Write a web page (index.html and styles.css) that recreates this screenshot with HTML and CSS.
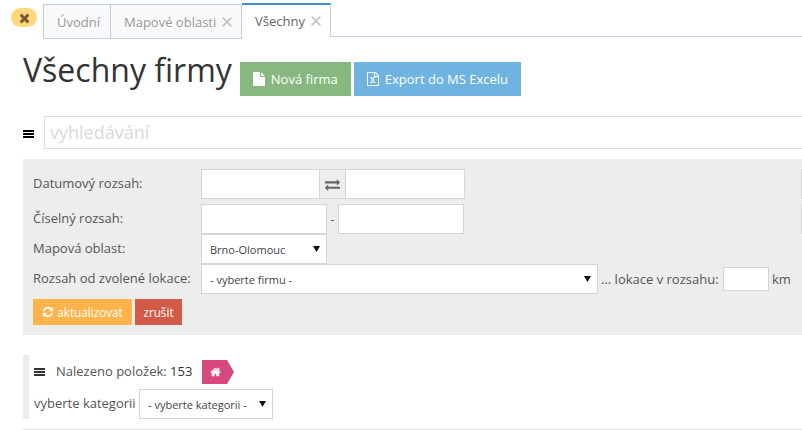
FILE: index.html
```html
<!DOCTYPE html>
<html lang="cs">
<head>
<meta charset="utf-8">
<title>Všechny firmy</title>
<link rel="stylesheet" href="styles.css">
</head>
<body>
<header class="tabbar">
  <button class="closeall" aria-label="Zavřít">
    <svg class="ic" width="11" height="14" viewBox="0 0 1408 1792"><path d="M1298 1322q0 40-28 68l-136 136q-28 28-68 28t-68-28l-294-294-294 294q-28 28-68 28t-68-28l-136-136q-28-28-28-68t28-68l294-294-294-294q-28-28-28-68t28-68l136-136q28-28 68-28t68 28l294 294 294-294q28-28 68-28t68 28l136 136q28 28 28 68t-28 68l-294 294 294 294q28 28 28 68z"/></svg>
  </button>
  <nav class="tabs">
    <span class="tab tab-home">Úvodní</span>
    <span class="tab tab-map">Mapové oblasti <svg class="tab-x" width="10" height="10" viewBox="0 0 10 10"><path d="M.7.7l8.600 8.600M9.300.7L.7 9.300"/></svg></span>
    <span class="tab tab-active">Všechny <svg class="tab-x" width="10" height="10" viewBox="0 0 10 10"><path d="M.7.7l8.600 8.600M9.300.7L.7 9.300"/></svg></span>
  </nav>
</header>

<main class="page">
  <div class="heading">
    <h1>Všechny firmy</h1>
    <a class="btn btn-green">
      <svg class="ic" width="12" height="14" viewBox="0 0 1536 1792"><path d="M1024 512v-472q22 14 36 28l408 408q14 14 28 36h-472zm-128 32q0 40 28 68t68 28h544v1056q0 40-28 68t-68 28h-1344q-40 0-68-28t-28-68v-1600q0-40 28-68t68-28h800v544z"/></svg>
      Nová firma</a>
    <a class="btn btn-blue">
      <svg class="ic" width="12" height="14" viewBox="0 0 1536 1792"><path d="M1468 380q28 28 48 76t20 88v1152q0 40-28 68t-68 28h-1344q-40 0-68-28t-28-68v-1600q0-40 28-68t68-28h896q40 0 88 20t76 48zm-444-244v376h376q-10-29-22-41l-313-313q-12-12-41-22zm384 1528v-1024h-416q-40 0-68-28t-28-68v-416h-768v1536h1280zm-1025-373v106h281v-106h-75l103-161q5-7 10-16.500t7.500-13.500 3.500-4h2q1 4 5 10 2 4 4.500 7.500t6 8 6.500 8.500l107 161h-76v106h291v-106h-68l-192-273 195-282h67v-107h-279v107h74l-103 159q-4 7-10 16.500t-9 13.500l-2 3h-2q-1-4-5-10-6-11-17-23l-102-159h76v-107h-290v107h68l189 272-194 283h-68z"/></svg>
      Export do MS Excelu</a>
  </div>

  <div class="search">
    <svg class="bars bars-black" width="11" height="8" viewBox="0 0 11 8"><path d="M0 0h11v2H0zM0 3h11v2H0zM0 6h11v2H0z"/></svg>
    <input class="search-input" type="text" placeholder="vyhledávání">
  </div>

  <section class="filter">
    <div class="filter-main">
      <div class="row row-date">
        <label class="lbl">Datumový rozsah:</label>
        <input class="inp inp-date" type="text">
        <span class="addon"><svg class="ic" width="15" height="15" viewBox="0 0 1792 1792"><path d="M1792 1184v192q0 13-9.500 22.500t-22.500 9.500h-1376v192q0 13-9.500 22.500t-22.500 9.500q-12 0-24-10l-319-320q-9-9-9-22 0-14 9-23l320-320q9-9 23-9 13 0 22.500 9.500t9.500 22.500v192h1376q13 0 22.500 9.500t9.500 22.500zm0-544q0 14-9 23l-320 320q-9 9-23 9-13 0-22.500-9.500t-9.500-22.500v-192h-1376q-13 0-22.500-9.500t-9.500-22.500v-192q0-13 9.500-22.500t22.500-9.500h1376v-192q0-14 9-23t23-9q12 0 24 10l319 319q9 9 9 23z"/></svg></span>
        <input class="inp inp-date2" type="text">
      </div>
      <div class="row row-num">
        <label class="lbl">Číselný rozsah:</label>
        <input class="inp inp-num" type="text">
        <span class="dash">-</span>
        <input class="inp inp-num2" type="text">
      </div>
      <div class="row row-map">
        <label class="lbl">Mapová oblast:</label>
        <select class="sel sel-map"><option>Brno-Olomouc</option></select>
      </div>
      <div class="row row-loc">
        <label class="lbl">Rozsah od zvolené lokace:</label>
        <select class="sel sel-loc"><option>- vyberte firmu -</option></select>
        <span class="loc-text">... lokace v rozsahu:</span>
        <input class="inp inp-km" type="text">
        <span class="km">km</span>
      </div>
      <div class="actions">
        <a class="btn-sm btn-orange">
          <svg class="ic" width="12" height="12" viewBox="0 0 1792 1792"><path d="M1639 1056q0 5-1 7-64 268-268 434.500t-478 166.500q-146 0-282.500-55t-243.500-157l-129 129q-19 19-45 19t-45-19-19-45v-448q0-26 19-45t45-19h448q26 0 45 19t19 45-19 45l-137 137q71 66 161 102t187 36q134 0 250-65t186-179q11-17 53-117 8-23 30-23h192q13 0 22.500 9.500t9.500 22.500zm25-800v448q0 26-19 45t-45 19h-448q-26 0-45-19t-19-45 19-45l138-138q-148-137-349-137-134 0-250 65t-186 179q-11 17-53 117-8 23-30 23h-199q-13 0-22.500-9.500t-9.500-22.500v-7q65-268 270-434.500t480-166.500q146 0 284 55.500t245 156.500l130-129q19-19 45-19t45 19 19 45z"/></svg>
          aktualizovat</a>
        <a class="btn-sm btn-red">zrušit</a>
      </div>
    </div>
    <div class="filter-side">
      <input class="inp stub" type="text">
      <input class="inp stub" type="text">
    </div>
  </section>

  <section class="results">
    <div class="results-top">
      <svg class="bars bars-dark" width="11" height="8" viewBox="0 0 11 8"><path d="M0 0h11v2H0zM0 3h11v2H0zM0 6h11v2H0z"/></svg>
      <span class="found">Nalezeno položek: <b>153</b></span>
      <a class="home-tag"><svg class="ic" width="11" height="12" viewBox="0 0 1664 1792"><path d="M1408 992v480q0 26-19 45t-45 19h-384v-384h-256v384h-384q-26 0-45-19t-19-45v-480q0-1 .5-3t.5-3l575-474 575 474q1 2 1 6zm223-69l-62 74q-8 9-21 11h-3q-13 0-21-7l-692-577-692 577q-12 8-24 7-13-2-21-11l-62-74q-8-10-7-23.500t11-21.500l719-599q32-26 76-26t76 26l244 204v-195q0-14 9-23t23-9h192q14 0 23 9t9 23v408l219 182q10 8 11 21.500t-7 23.500z"/></svg></a>
    </div>
    <div class="results-cat">
      <label class="cat-lbl">vyberte kategorii</label>
      <select class="sel sel-cat"><option>- vyberte kategorii -</option></select>
    </div>
  </section>
  <hr class="rule">
</main>
</body>
</html>
```

FILE: styles.css
```css
* { box-sizing: border-box; }
html, body { margin: 0; padding: 0; height: 430px; overflow: hidden; background: #fff; }
body { font-family: "Open Sans", sans-serif; font-size: 13px; color: #555; }
.ic { fill: currentColor; display: block; flex: none; }

.tabbar { position: relative; height: 38px; display: flex; align-items: flex-start; padding: 4px 0 0 11px; }
.tabbar::after { content: ""; position: absolute; left: 331px; right: 0; top: 36px; height: 1px; background: #c3d0e0; }
.closeall { width: 26px; height: 19px; margin-top: 4px; margin-right: 6px; padding: 0; border: 0; border-radius: 10px; background: #ffd87c; color: #7a5a34; display: flex; align-items: center; justify-content: center; }
.tabs { display: flex; height: 35px; }
.tab { height: 35px; display: flex; align-items: center; padding-left: 13px; gap: 6px; font-size: 13px; color: #999; background: #f8f9fa; border: 1px solid #c3d0e0; }
.tab-home { width: 68px; }
.tab-map { width: 131px; border-left: 0; }
.tab-active { width: 89px; height: 34px; margin-top: -1px; border-left: 0; border-top: 2px solid #428bca; border-bottom: 0; background: #fff; color: #666; }
.tab-x { flex: none; fill: none; stroke: #c4c4c4; stroke-width: 1.8; }

.page { padding-left: 23px; }
.heading { display: flex; align-items: flex-start; height: 58px; }
h1 { margin: 6px 8px 0 0; font-size: 32px; line-height: 52px; height: 52px; font-weight: 400; color: #333; white-space: nowrap; }
.btn { height: 34px; margin-top: 24px; display: flex; align-items: center; gap: 6px; padding: 0 13px; color: #fff; font-size: 13px; white-space: nowrap; }
.btn-green { width: 111px; background: #87b87f; margin-right: 3px; }
.btn-blue { width: 167px; background: #6fb3e0; }

.search { display: flex; align-items: center; height: 33px; margin-top: 20px; }
.bars { flex: none; display: block; }
.bars-black { fill: #000; margin-right: 10px; margin-top: 2px; }
.search-input { width: 780px; flex: none; height: 33px; border: 1px solid #ddd; padding: 0 5px 2px; font: 18px "Open Sans", sans-serif; outline: 0; }
.search-input::placeholder { color: #d9d9d9; opacity: 1; }

.filter { display: flex; width: 779px; height: 176px; margin-top: 10px; background: #ededed; overflow: hidden; }
.filter-main { width: 778px; flex: none; padding: 10px 0 0 10px; }
.filter-side { flex: none; display: flex; flex-direction: column; gap: 5px; padding-top: 10px; }
.row { display: flex; align-items: center; height: 30px; }
.row-num { margin-top: 5px; }
.lbl { width: 168px; flex: none; padding-bottom: 2px; color: #555; white-space: nowrap; }
.inp { height: 30px; border: 1px solid #d5d5d5; background: #fff; padding: 0; flex: none; outline: 0; border-radius: 0; }
.inp-date { width: 119px; }
.addon { width: 27px; height: 30px; flex: none; margin-left: -1px; display: flex; align-items: center; justify-content: center; background: #eee; border: 1px solid #d5d5d5; color: #666; }
.inp-date2 { width: 120px; margin-left: -1px; }
.inp-num { width: 126px; }
.dash { width: 11px; text-align: center; flex: none; font-size: 12px; }
.inp-num2 { width: 126px; }
.stub { width: 20px; }
.sel { appearance: none; height: 30px; border: 1px solid #d5d5d5; border-radius: 0; font: 11px "Open Sans", sans-serif; color: #444; padding: 0 18px 0 8px; outline: 0; flex: none; background: #fff url("data:image/svg+xml,%3Csvg xmlns='http://www.w3.org/2000/svg' width='7' height='6'%3E%3Cpath d='M0 0h7L3.500 6z' fill='%23111'/%3E%3C/svg%3E") no-repeat right 6px center; }
.sel-map { width: 126px; }
.sel-loc { width: 397px; }
.loc-text { margin-left: 3px; width: 122px; flex: none; white-space: nowrap; }
.inp-km { width: 46px; height: 24px; }
.km { margin-left: 3px; }
.actions { display: flex; gap: 3px; margin-top: 5px; }
.btn-sm { height: 26px; display: flex; align-items: center; justify-content: center; gap: 3px; color: #fff; font-size: 11.7px; }
.btn-orange { width: 99px; background: #ffb44b; }
.btn-red { width: 47px; background: #d15b47; }

.results { width: 779px; height: 64px; margin-top: 20px; border-left: 6px solid #ededed; padding: 5px 0 0 5px; }
.results-top { display: flex; align-items: center; height: 24px; }
.bars-dark { fill: #333; margin-right: 11px; }
.found { padding-bottom: 2px; white-space: nowrap; width: 146px; flex: none; }
.found b { font-weight: 400; color: #333; }
.home-tag { width: 32px; height: 24px; background: #d6487e; color: #fff; display: flex; align-items: center; justify-content: center; padding-right: 5px; clip-path: polygon(0 0, 25px 0, 32px 50%, 25px 100%, 0 100%); }
.results-cat { display: flex; align-items: center; height: 30px; margin-top: 5px; }
.cat-lbl { white-space: nowrap; width: 105px; flex: none; padding-bottom: 2px; }
.sel-cat { width: 134px; }
.rule { width: 779px; height: 1px; margin: 10px 0 0; border: 0; background: #e3e3e3; }
```
